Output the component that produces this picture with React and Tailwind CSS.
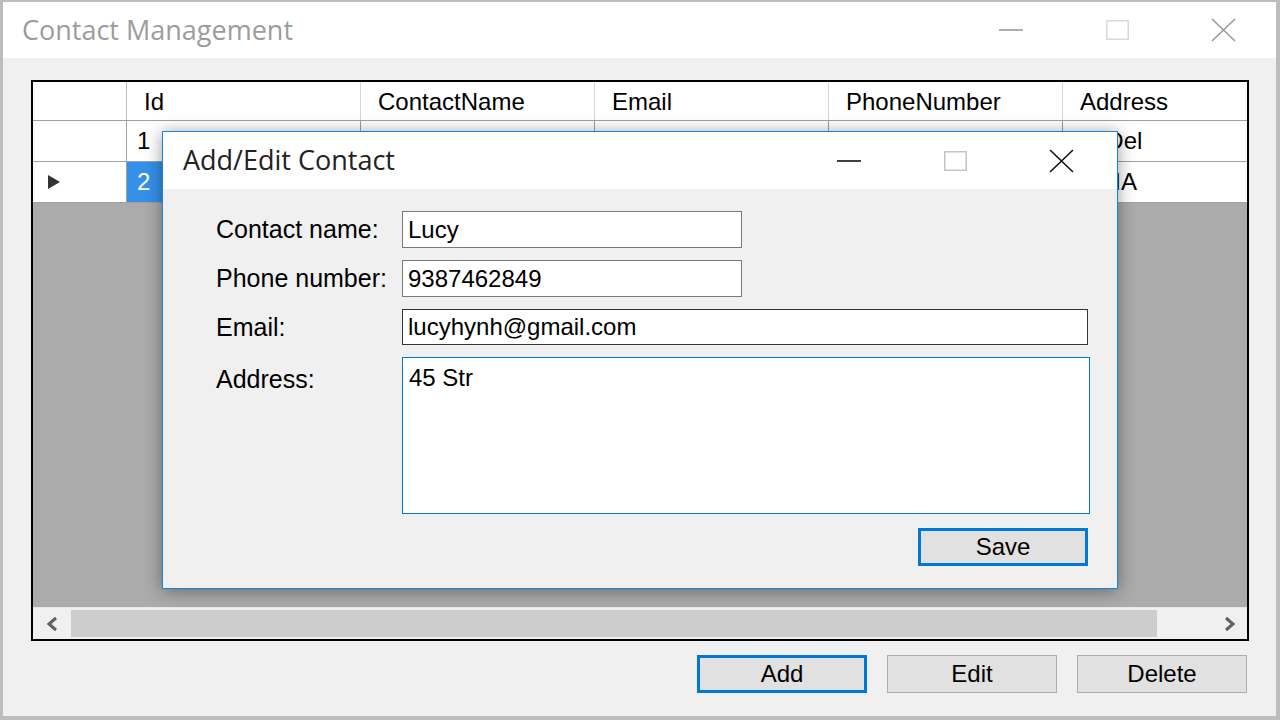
import React from 'react';

const sans = { fontFamily: '"Liberation Sans", Arial, sans-serif' };
const ui = { fontFamily: '"Open Sans", "Noto Sans", sans-serif' };

const columns = ['Id', 'ContactName', 'Email', 'PhoneNumber', 'Address'];
const rows = [
  { id: '1', name: 'John', email: 'john@gmail.com', phone: '0123456789', address: '45 Del' },
  { id: '2', name: 'Lucy', email: 'lucyhynh@gmail.com', phone: '9387462849', address: 'INDIA' },
];

const CaptionButtons = ({ dark }) => (
  <div className="flex h-full">
    <div className="w-[106px] flex items-center justify-center">
      <svg width="24" height="4" viewBox="0 0 24 4">
        <line x1="0" y1="2" x2="24" y2="2" stroke={dark ? '#111' : '#9a9a9a'} strokeWidth="1.6" />
      </svg>
    </div>
    <div className="w-[106px] flex items-center justify-center">
      <svg width="23" height="20" viewBox="0 0 23 20">
        <rect x="0.75" y="0.75" width="21.5" height="18.5" fill="none" stroke={dark ? '#c4c4c4' : '#d9d9d9'} strokeWidth="1.5" />
      </svg>
    </div>
    <div className="w-[106px] flex items-center justify-center">
      <svg width="25" height="24" viewBox="0 0 25 24">
        <path d="M1 1 L24 23 M24 1 L1 23" stroke={dark ? '#111' : '#9a9a9a'} strokeWidth="1.6" fill="none" />
      </svg>
    </div>
  </div>
);

const WinButton = ({ label, focused, className = '' }) => (
  <div
    className={`w-[170px] h-[38px] flex items-center justify-center bg-[#e1e1e1] text-[24px] text-black ${
      focused ? 'border-[3px] border-[#0078d7]' : 'border border-[#adadad]'
    } ${className}`}
    style={sans}
  >
    {label}
  </div>
);

const Field = ({ label, value, width, height, border }) => (
  <div className="flex items-center">
    <div className="w-[186px] ml-[53px] text-[25px] leading-none text-black" style={sans}>{label}</div>
    <div
      className={`bg-white flex items-center px-[5px] text-[24px] leading-none text-black border ${border}`}
      style={{ ...sans, width, height }}
    >
      {value}
    </div>
  </div>
);

export default function App() {
  return (
    <div className="w-[1280px] h-[720px] relative overflow-hidden flex flex-col bg-[#f0f0f0] border-t-2 border-l-[3px] border-r-4 border-b-4 border-[#bdbdbd]">
      {/* Title bar */}
      <div className="h-[56px] bg-white flex items-center">
        <span className="pl-[19px] text-[27px] text-[#9c9c9c]" style={ui}>Contact Management</span>
        <div className="ml-auto h-full">
          <CaptionButtons />
        </div>
      </div>

      {/* Client area */}
      <div className="flex-1 flex flex-col pt-[22px] pl-[28px] pr-[27px]">
        {/* DataGridView */}
        <div className="h-[561px] border-2 border-black flex flex-col overflow-hidden bg-[#ababab]" style={sans}>
          <div className="h-[39px] flex bg-white border-b border-[#a0a0a0] shrink-0">
            <div className="w-[94px] shrink-0 border-r border-[#bfbfbf]" />
            {columns.map(c => (
              <div key={c} className="w-[234px] shrink-0 border-r border-[#d5d5d5] flex items-center pl-[17px] pt-[2px] text-[24px] text-black">
                {c}
              </div>
            ))}
          </div>
          {rows.map((r, i) => (
            <div key={r.id} className="h-[41px] flex bg-white border-b border-[#a0a0a0] shrink-0">
              <div className="w-[94px] shrink-0 border-r border-[#a0a0a0] flex items-center pl-[14px]">
                {i === 1 && (
                  <svg width="14" height="16" viewBox="0 0 14 16">
                    <path d="M1 1 L13 8 L1 15 Z" fill="#333" />
                  </svg>
                )}
              </div>
              {[r.id, r.name, r.email, r.phone, r.address].map((v, j) => (
                <div
                  key={j}
                  className={`w-[234px] shrink-0 border-r border-[#a0a0a0] flex items-center pl-[10px] text-[24px] whitespace-nowrap ${
                    i === 1 && j === 0 ? 'bg-[#3590ea] text-white' : 'text-black'
                  }`}
                >
                  {v}
                </div>
              ))}
            </div>
          ))}
          <div className="flex-1" />
          {/* Horizontal scrollbar */}
          <div className="h-[32px] flex bg-[#f0f0f0] shrink-0 border-t border-[#e8e8e8]">
            <div className="w-[38px] flex items-center justify-center">
              <svg width="14" height="16" viewBox="0 0 14 16">
                <path d="M11 2 L4 8 L11 14" stroke="#606060" strokeWidth="3" fill="none" />
              </svg>
            </div>
            <div className="w-[1086px] my-[2px] bg-[#cdcdcd]" />
            <div className="flex-1 flex items-center justify-end pr-[10px]">
              <svg width="14" height="16" viewBox="0 0 14 16">
                <path d="M3 2 L10 8 L3 14" stroke="#606060" strokeWidth="3" fill="none" />
              </svg>
            </div>
          </div>
        </div>

        {/* Buttons */}
        <div className="mt-[14px] flex justify-end gap-[20px] pr-[2px]">
          <WinButton label="Add" focused />
          <WinButton label="Edit" />
          <WinButton label="Delete" />
        </div>
      </div>

      {/* Add/Edit dialog */}
      <div className="absolute left-[159px] top-[129px] w-[956px] h-[458px] flex flex-col border border-[#1883d7] bg-[#f0f0f0] shadow-[0_2px_16px_rgba(0,0,0,0.4)]">
        <div className="h-[57px] bg-white flex items-center shrink-0">
          <span className="pl-[20px] text-[27px] text-[#222]" style={ui}>Add/Edit Contact</span>
          <div className="ml-auto mr-[3px] h-full">
            <CaptionButtons dark />
          </div>
        </div>
        <div className="flex-1 flex flex-col pt-[22px] gap-[12px]">
          <Field label="Contact name:" value="Lucy" width={340} height={37} border="border-[#7a7a7a]" />
          <Field label="Phone number:" value="9387462849" width={340} height={37} border="border-[#7a7a7a]" />
          <Field label="Email:" value="lucyhynh@gmail.com" width={686} height={36} border="border-[#333]" />
          <div className="flex items-start">
            <div className="w-[186px] ml-[53px] pt-[10px] text-[25px] leading-none text-black" style={sans}>Address:</div>
            <div className="w-[688px] h-[157px] bg-white border-[1.5px] border-[#0078d7] px-[6px] pt-[2px] text-[24px] text-black" style={sans}>
              45 Str
            </div>
          </div>
          <div className="mt-[2px] ml-[755px]">
            <WinButton label="Save" focused />
          </div>
        </div>
      </div>
    </div>
  );
}
